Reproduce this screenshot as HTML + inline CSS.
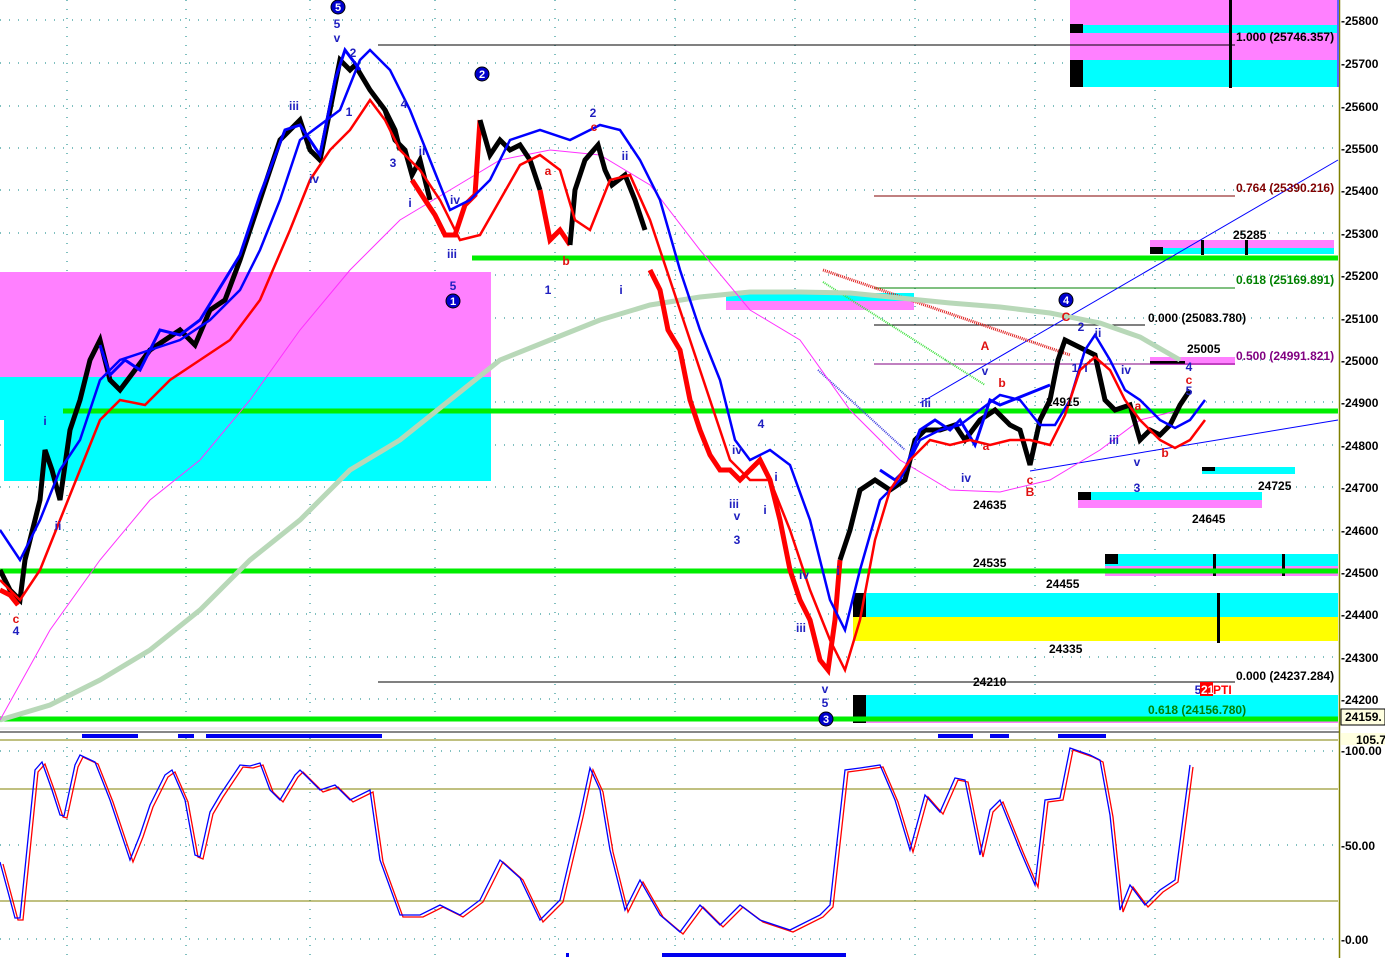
<!DOCTYPE html>
<html><head><meta charset="utf-8"><style>
html,body{margin:0;padding:0;background:#fff;overflow:hidden}
svg{display:block}
text{font-family:"Liberation Sans",sans-serif;font-weight:bold}
</style></head><body>
<svg width="1385" height="958" viewBox="0 0 1385 958" xmlns="http://www.w3.org/2000/svg">
<rect width="1385" height="958" fill="#fff"/>
<g stroke="#008080" stroke-width="1" stroke-dasharray="1,8">
<line x1="0" y1="20" x2="1338" y2="20"/><line x1="0" y1="63" x2="1338" y2="63"/><line x1="0" y1="106" x2="1338" y2="106"/><line x1="0" y1="148" x2="1338" y2="148"/><line x1="0" y1="190" x2="1338" y2="190"/><line x1="0" y1="233" x2="1338" y2="233"/><line x1="0" y1="275" x2="1338" y2="275"/><line x1="0" y1="318" x2="1338" y2="318"/><line x1="0" y1="360" x2="1338" y2="360"/><line x1="0" y1="402" x2="1338" y2="402"/><line x1="0" y1="445" x2="1338" y2="445"/><line x1="0" y1="487" x2="1338" y2="487"/><line x1="0" y1="530" x2="1338" y2="530"/><line x1="0" y1="572" x2="1338" y2="572"/><line x1="0" y1="614" x2="1338" y2="614"/><line x1="0" y1="657" x2="1338" y2="657"/><line x1="0" y1="699" x2="1338" y2="699"/>
<line x1="0" y1="751" x2="1338" y2="751"/><line x1="0" y1="845" x2="1338" y2="845"/><line x1="0" y1="939" x2="1338" y2="939"/>
<line x1="67" y1="0" x2="67" y2="958"/><line x1="186" y1="0" x2="186" y2="958"/><line x1="310" y1="0" x2="310" y2="958"/><line x1="435" y1="0" x2="435" y2="958"/><line x1="555" y1="0" x2="555" y2="958"/><line x1="675" y1="0" x2="675" y2="958"/><line x1="795" y1="0" x2="795" y2="958"/><line x1="915" y1="0" x2="915" y2="958"/><line x1="1035" y1="0" x2="1035" y2="958"/><line x1="1155" y1="0" x2="1155" y2="958"/>
</g>
<rect x="0" y="272" width="491" height="105" fill="#ff80ff"/>
<rect x="4" y="377" width="487" height="104" fill="#00ffff"/>
<rect x="0" y="377" width="4" height="43" fill="#00ffff"/>
<rect x="1070" y="0" width="268" height="87" fill="#ff80ff"/>
<rect x="1070" y="25" width="268" height="8" fill="#00ffff"/>
<rect x="1070" y="60" width="268" height="27" fill="#00ffff"/>
<rect x="1070" y="24" width="13" height="9" fill="#000"/><rect x="1070" y="60" width="13" height="27" fill="#000"/>
<rect x="1229" y="0" width="3" height="88" fill="#000"/>
<rect x="1150" y="240" width="184" height="8" fill="#ff80ff"/><rect x="1150" y="248" width="184" height="6" fill="#00ffff"/><rect x="1150" y="247" width="13" height="7" fill="#000"/>
<rect x="1201" y="240" width="3" height="15" fill="#000"/><rect x="1245" y="240" width="3" height="15" fill="#000"/>
<rect x="726" y="293" width="188" height="8" fill="#00ffff"/><rect x="726" y="301" width="188" height="9" fill="#ff80ff"/>
<rect x="1150" y="357" width="85" height="8" fill="#ff80ff"/><rect x="1150" y="361" width="35" height="3" fill="#000"/>
<rect x="1202" y="467" width="93" height="7" fill="#00ffff"/><rect x="1202" y="467" width="13" height="4" fill="#000"/>
<rect x="1078" y="492" width="184" height="8" fill="#00ffff"/><rect x="1078" y="500" width="184" height="8" fill="#ff80ff"/><rect x="1078" y="492" width="13" height="8" fill="#000"/>
<rect x="1105" y="554" width="233" height="12" fill="#00ffff"/><rect x="1105" y="566" width="233" height="10" fill="#ff80ff"/><rect x="1105" y="554" width="13" height="10" fill="#000"/>
<rect x="1213" y="554" width="3" height="22" fill="#000"/><rect x="1282" y="554" width="3" height="22" fill="#000"/>
<rect x="853" y="593" width="485" height="24" fill="#00ffff"/><rect x="853" y="617" width="485" height="24" fill="#ffff00"/><rect x="853" y="593" width="13" height="24" fill="#000"/>
<rect x="1217" y="593" width="3" height="50" fill="#000"/>
<rect x="853" y="695" width="485" height="23" fill="#00ffff"/><rect x="853" y="718" width="485" height="5" fill="#ff80ff"/><rect x="853" y="695" width="13" height="28" fill="#000"/>
<line x1="378" y1="45" x2="1235" y2="45" stroke="#000"/>
<line x1="874" y1="196" x2="1235" y2="196" stroke="#800000"/>
<line x1="874" y1="288" x2="1235" y2="288" stroke="#008000"/>
<line x1="874" y1="325" x2="1145" y2="325" stroke="#000"/>
<line x1="874" y1="364" x2="1235" y2="364" stroke="#800080"/>
<line x1="378" y1="682" x2="1235" y2="682" stroke="#000"/>
<g stroke="#00ee00" stroke-width="5">
<line x1="472" y1="258" x2="1338" y2="258"/><line x1="63" y1="411" x2="1338" y2="411"/><line x1="0" y1="571" x2="1338" y2="571"/><line x1="0" y1="719" x2="1338" y2="719"/>
</g>
<line x1="920" y1="403" x2="1338" y2="160" stroke="#0000ff"/>
<line x1="1030" y1="471" x2="1338" y2="420" stroke="#0000ff"/>
<line x1="823" y1="270" x2="1070" y2="355" stroke="#e02020" stroke-width="3" stroke-dasharray="1,1"/>
<line x1="823" y1="282" x2="985" y2="385" stroke="#40e040" stroke-width="2" stroke-dasharray="1,1"/>
<line x1="818" y1="370" x2="905" y2="450" stroke="#4040e0" stroke-width="2" stroke-dasharray="1,1"/>
<polyline fill="none" stroke="#b8d8b8" stroke-width="5" points="0,720 50,705 100,680 150,650 200,610 250,560 300,520 350,470 400,440 450,400 500,360 550,340 600,320 650,305 700,297 750,292 800,292 850,293 900,298 950,303 1000,307 1050,313 1100,323 1140,337 1180,360"/>
<polyline fill="none" stroke="#ff30ff" stroke-width="1" points="0,720 50,630 100,560 150,500 200,460 250,400 300,330 350,270 400,220 450,190 500,160 550,150 600,155 650,185 700,250 750,310 800,340 850,410 900,460 950,490 1000,492 1050,480 1100,450 1140,420 1180,410"/>
<polyline fill="none" stroke="#000" stroke-width="5" points="0,570 10,590 20,600 25,560 30,540 40,500 45,450 52,470 60,500 70,430 80,400 90,360 100,340 110,380 120,390 135,370 150,350 165,340 180,330 195,345 210,310 225,300 240,260 250,230 260,200 270,170 280,140 290,130 300,120 310,150 320,160 330,110 340,60 350,70 355,65 370,90 385,110 395,130 400,150"/>
<polyline fill="none" stroke="#0000ff" stroke-width="3" points="100,345 110,375 125,360 140,370 160,330 180,335 200,320 240,255 260,195 285,130 300,125 320,155 335,80 345,50 360,70"/>
<polyline fill="none" stroke="#ff0000" stroke-width="5" points="0,590 10,595 18,605"/>
<polyline fill="none" stroke="#000" stroke-width="5" points="385,110 395,140 405,150 412,175 420,160 430,200"/>
<polyline fill="none" stroke="#ff0000" stroke-width="5" points="412,180 425,200 435,215 445,235 455,235 465,205 475,195 480,120"/>
<polyline fill="none" stroke="#000" stroke-width="5" points="480,120 490,155 500,140 510,150 520,145 530,160 540,190"/>
<polyline fill="none" stroke="#ff0000" stroke-width="5" points="540,190 550,240 560,230 570,245"/>
<polyline fill="none" stroke="#000" stroke-width="5" points="570,245 575,190 585,160 598,145 605,170 612,185 625,175 635,200 645,230"/>
<polyline fill="none" stroke="#ff0000" stroke-width="5" points="650,270 660,290 668,330 680,350 690,400 700,430 710,455 720,470 730,470 740,480 750,470 760,460 770,480 780,520 790,570 800,600 810,620 820,660 828,670 835,620 840,560"/>
<polyline fill="none" stroke="#000" stroke-width="5" points="840,560 850,530 860,490 875,480 890,490 905,480 915,440 925,430 940,430 955,425 965,440 980,420 995,410 1010,425 1020,430 1030,465 1040,420 1050,400 1058,360 1065,340 1075,345 1085,350 1095,355 1105,400 1115,410 1130,405 1140,440 1150,430 1160,435 1170,425 1180,405 1190,390"/>
<polyline fill="none" stroke="#0000ff" stroke-width="3" points="880,470 895,480 905,470 920,430 935,420 950,430 960,420 975,445 990,400 1000,405 1050,385"/>
<polyline fill="none" stroke="#0000ff" stroke-width="2.5" points="0,530 20,560 40,520 60,470 80,440 100,380 120,360 150,350 180,340 210,320 240,290 260,250 280,200 300,140 320,125 340,110 360,60 370,50 390,70 410,110 430,160 450,210 470,200 490,180 510,140 540,130 570,140 600,125 620,130 640,160 660,200 680,270 700,330 720,380 735,440 750,460 770,450 790,465 810,520 830,600 845,630 860,570 880,500 900,480 920,440 940,430 960,425 980,410 1000,395 1020,400 1040,425 1055,425 1070,400 1085,350 1095,335 1110,360 1125,390 1140,400 1160,420 1175,428 1190,420 1205,400"/>
<polyline fill="none" stroke="#ff0000" stroke-width="2.5" points="0,580 20,600 40,570 60,520 80,470 100,420 120,400 145,405 170,380 200,360 230,340 260,300 290,230 310,180 330,150 350,130 370,100 385,120 400,150 420,170 440,200 460,240 480,235 500,200 520,165 540,155 560,170 575,220 590,230 610,180 630,175 650,220 670,280 690,340 710,400 730,460 750,480 770,480 790,530 810,590 830,640 845,670 860,620 875,540 890,490 910,460 930,440 950,445 970,440 990,445 1010,440 1030,440 1050,445 1065,415 1080,370 1095,357 1110,370 1125,400 1140,420 1160,440 1175,448 1190,440 1205,420"/>
<g fill="#0000cc" stroke="#000"><circle cx="338" cy="7" r="7"/><circle cx="482" cy="74" r="7"/><circle cx="453" cy="301" r="7"/><circle cx="1066" cy="300" r="7"/><circle cx="826" cy="719" r="7"/></g>
<g fill="#fff" font-size="11" text-anchor="middle"><text x="338" y="11">5</text><text x="482" y="78">2</text><text x="453" y="305">1</text><text x="1066" y="304">4</text><text x="826" y="723">3</text></g>
<g fill="#2020c0" font-size="12" text-anchor="middle">
<text x="337" y="28">5</text><text x="337" y="42">v</text><text x="353" y="57">2</text><text x="349" y="116">1</text><text x="393" y="167">3</text><text x="404" y="108">4</text><text x="294" y="110">iii</text><text x="314" y="183">iv</text><text x="422" y="155">ii</text><text x="410" y="207">i</text><text x="455" y="204">iv</text><text x="452" y="258">iii</text><text x="453" y="290">5</text><text x="548" y="294">1</text><text x="593" y="117">2</text><text x="625" y="160">ii</text><text x="621" y="294">i</text><text x="761" y="428">4</text><text x="737" y="454">iv</text><text x="734" y="508">iii</text><text x="737" y="520">v</text><text x="737" y="544">3</text><text x="765" y="514">i</text><text x="776" y="481">i</text><text x="804" y="579">iv</text><text x="801" y="632">iii</text><text x="825" y="693">v</text><text x="825" y="707">5</text><text x="838" y="575">i</text><text x="926" y="407">iii</text><text x="966" y="482">iv</text><text x="985" y="375">v</text><text x="1081" y="331">2</text><text x="1075" y="372">1</text><text x="1086" y="372">i</text><text x="1098" y="337">ii</text><text x="1126" y="374">iv</text><text x="1114" y="444">iii</text><text x="1137" y="466">v</text><text x="1137" y="492">3</text><text x="1189" y="371">4</text><text x="1189" y="395">5</text><text x="16" y="635">4</text><text x="58" y="530">ii</text><text x="45" y="425">i</text><text x="1198" y="694">5</text>
</g>
<g fill="#e01010" font-size="12" text-anchor="middle">
<text x="594" y="131">c</text><text x="548" y="175">a</text><text x="566" y="265">b</text><text x="16" y="623">c</text><text x="985" y="350">A</text><text x="1002" y="387">b</text><text x="986" y="450">a</text><text x="1030" y="484">c</text><text x="1030" y="496">B</text><text x="1066" y="321">C</text><text x="1138" y="410">a</text><text x="1165" y="457">b</text><text x="1189" y="384">c</text>
</g>
<g fill="#000" font-size="12">
<text x="973" y="567">24535</text><text x="1046" y="588">24455</text><text x="1049" y="653">24335</text><text x="973" y="686">24210</text><text x="973" y="509">24635</text><text x="1192" y="523">24645</text><text x="1258" y="490">24725</text><text x="1187" y="353">25005</text><text x="1233" y="239">25285</text><text x="1046" y="406">24915</text>
<text x="1236" y="41">1.000 (25746.357)</text><text x="1148" y="322">0.000 (25083.780)</text><text x="1236" y="680">0.000 (24237.284)</text>
</g>
<text x="1236" y="192" fill="#800000" font-size="12">0.764 (25390.216)</text>
<text x="1236" y="284" fill="#008000" font-size="12">0.618 (25169.891)</text>
<text x="1236" y="360" fill="#800080" font-size="12">0.500 (24991.821)</text>
<text x="1148" y="714" fill="#008000" font-size="12">0.618 (24156.780)</text>
<rect x="1200" y="682" width="13" height="14" fill="#ff0000"/><text x="1201" y="694" fill="#fff" font-size="12">21</text><text x="1213" y="694" fill="#ff0000" font-size="12">PTI</text>
<rect x="0" y="727" width="1338" height="3" fill="#eee"/>
<rect x="0" y="731" width="1385" height="2" fill="#888"/>
<g fill="#0000ee"><rect x="82" y="734" width="56" height="4"/><rect x="178" y="734" width="16" height="4"/><rect x="206" y="734" width="176" height="4"/><rect x="938" y="734" width="35" height="4"/><rect x="990" y="734" width="19" height="4"/><rect x="1058" y="734" width="48" height="4"/><rect x="662" y="953" width="184" height="4"/><rect x="566" y="953" width="3" height="4"/></g>
<g stroke="#808000" stroke-width="1"><line x1="0" y1="740" x2="1338" y2="740"/><line x1="0" y1="789" x2="1338" y2="789"/><line x1="0" y1="901" x2="1338" y2="901"/></g>
<polyline fill="none" stroke="#ff0000" stroke-width="1.3" transform="translate(3,2)" points="0,862 15,918 20,918 35,770 42,762 52,790 60,815 64,816 75,765 80,755 95,762 110,800 130,860 140,835 150,805 165,775 172,770 185,800 195,855 200,857 210,812 220,795 240,765 250,766 260,763 270,790 280,800 295,775 300,770 320,790 335,785 350,800 370,790 380,860 400,915 420,915 440,905 460,915 480,900 500,860 520,878 540,920 560,900 580,815 590,768 600,790 610,850 625,910 640,880 660,915 680,932 700,905 720,925 740,905 760,920 790,930 820,915 830,905 845,770 860,768 880,765 895,800 910,850 925,795 940,812 955,778 965,780 980,855 990,810 1000,800 1020,850 1035,885 1045,800 1060,798 1070,748 1090,755 1100,760 1110,815 1120,910 1130,885 1145,905 1160,890 1175,880 1190,765"/>
<polyline fill="none" stroke="#0000ff" stroke-width="1.3" points="0,862 15,918 20,918 35,770 42,762 52,790 60,815 64,816 75,765 80,755 95,762 110,800 130,860 140,835 150,805 165,775 172,770 185,800 195,855 200,857 210,812 220,795 240,765 250,766 260,763 270,790 280,800 295,775 300,770 320,790 335,785 350,800 370,790 380,860 400,915 420,915 440,905 460,915 480,900 500,860 520,878 540,920 560,900 580,815 590,768 600,790 610,850 625,910 640,880 660,915 680,932 700,905 720,925 740,905 760,920 790,930 820,915 830,905 845,770 860,768 880,765 895,800 910,850 925,795 940,812 955,778 965,780 980,855 990,810 1000,800 1020,850 1035,885 1045,800 1060,798 1070,748 1090,755 1100,760 1110,815 1120,910 1130,885 1145,905 1160,890 1175,880 1190,765"/>
<rect x="1339" y="0" width="46" height="958" fill="#fff"/>
<line x1="1339.5" y1="0" x2="1339.5" y2="958" stroke="#808000" stroke-width="1.5"/>
<rect x="1337" y="0" width="2" height="87" fill="#6060ff"/>
<g fill="#000" font-size="12">
<text x="1341" y="25">-25800</text><text x="1341" y="68">-25700</text><text x="1341" y="111">-25600</text><text x="1341" y="153">-25500</text><text x="1341" y="195">-25400</text><text x="1341" y="238">-25300</text><text x="1341" y="280">-25200</text><text x="1341" y="323">-25100</text><text x="1341" y="365">-25000</text><text x="1341" y="407">-24900</text><text x="1341" y="450">-24800</text><text x="1341" y="492">-24700</text><text x="1341" y="535">-24600</text><text x="1341" y="577">-24500</text><text x="1341" y="619">-24400</text><text x="1341" y="662">-24300</text><text x="1341" y="704">-24200</text>
</g>
<rect x="1341" y="709" width="44" height="16" fill="#ffffe0" stroke="#000"/><text x="1345" y="721" font-size="12">24159.</text>
<rect x="1341" y="733" width="44" height="12" fill="#ffffe0"/><text x="1356" y="744" font-size="12">105.7</text>
<g fill="#000" font-size="12"><text x="1341" y="755">-100.00</text><text x="1341" y="850">-50.00</text><text x="1341" y="944">-0.00</text></g>
</svg>
</body></html>
